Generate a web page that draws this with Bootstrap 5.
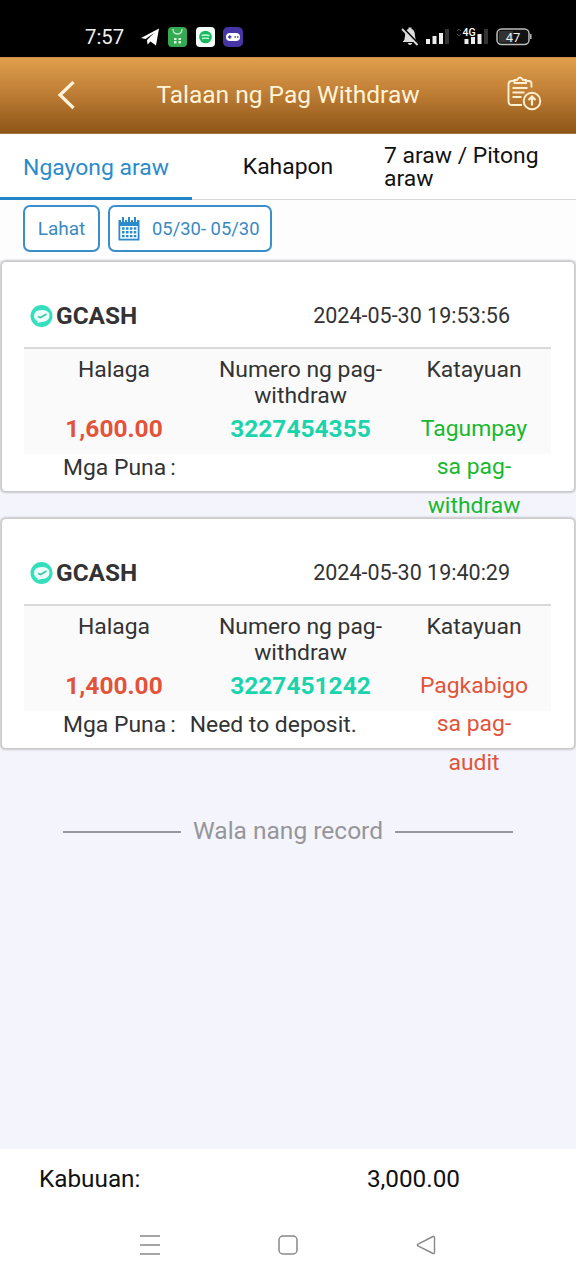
<!DOCTYPE html>
<html lang="fil">
<head>
<meta charset="utf-8">
<meta name="viewport" content="width=device-width, initial-scale=1">
<title>Talaan ng Pag Withdraw</title>
<link href="https://cdn.jsdelivr.net/npm/bootstrap@5.3.0/dist/css/bootstrap.min.css" rel="stylesheet">
<style>
body{font-family:Roboto,"Liberation Sans",sans-serif;font-size:22.9px;line-height:26px;color:#333;background:#f4f4fc;height:1280px;overflow:hidden}
svg{display:block;flex:none}
.status-bar{height:57px;background:#000;color:#eee;padding:16px 44px 0 85px}
.clock{font-size:20.3px;line-height:42px;width:55px}
.app-bar{height:77px;background:linear-gradient(#df9f4c,#c07f36 45%,#8d5517);border-top:1px solid #c98c4b;border-bottom:1px solid #9d7649;color:#fff3da;padding:0 34px 0 56px}
.app-title{font-size:24.5px;font-weight:400;padding:0 7px 2px 0}
.tabs-row{height:66px;background:#fff;color:#111;line-height:23px;border-bottom:1px solid #d8d8d8}
.tab-item{width:192px;height:65px}
.tab-item.current{color:#2a8bcb;height:66px;border-bottom:3px solid #2386c8;padding-top:3px}
.filters{height:60px;background:#fdfdfe;padding:5px 23px 0;gap:8px}
.filter-btn{height:47px;border:2px solid #3a8fca;border-radius:7px;color:#3a8abf;font-size:18.4px;background:#fff}
.type-btn{width:77px;font-size:19px}
.date-btn{width:164px;padding-left:8px;gap:12px}
.record-list{padding-top:2px}
.record{height:229px;margin:0 2px 28px;padding:0 23px 0 22px;background:#fff;border-radius:4px;box-shadow:0 0 2px 1.500px #c8c8ca}
.record-head{height:87px;border-bottom:2px solid #d9d9db;padding:22px 41px 0 6px}
.bank{font-size:24.4px;font-weight:700;gap:3px}
.stamp{font-size:21.5px;padding-top:1px}
.record-grid{display:grid;grid-template-columns:180px 193px 154px;background:#fafafa;height:105px;padding-top:8px;text-align:center;grid-template-rows:52px 38px}
.val{line-height:38.4px;height:38px;padding-top:1px}
.num{font-weight:700;font-size:24.5px}
.red{color:#e2533a}.teal{color:#1cd4ac}.green{color:#16b82d}
.note{padding-left:39px;line-height:28px}
.note-text{margin-left:14px}
.end-row{padding-top:42px;gap:12px}
.end-rule{width:118px;height:1.500px;margin-top:2px;background:#98989c}
.end-text{color:#96969a;font-size:24.5px}
.total{height:60px;background:#fff;color:#111;padding:0 116px 0 39px;font-size:24.3px}
.sys-nav{height:71px;background:#fff;padding:0 140px}
</style>
</head>
<body class="d-flex flex-column">
<header>
 <div class="status-bar d-flex align-items-start justify-content-between">
  <div class="d-flex">
   <span class="clock">7:57</span>
   <svg width="104" height="40" viewBox="140 16 104 40">
    <path d="M141 38 159 28.500 156 45.500 150.500 41.500 147.500 44.500 147 40 154 33 145.500 39Z" fill="#fff"/>
    <rect x="168" y="27" width="19" height="20" rx="4" fill="#36aa52"/><path d="M173 29q0 5 4.500 5t4.500-5" fill="none" stroke="#c5f0c9" stroke-width="1.300"/><path d="M174 38h2.500v2H174zM178.500 38h2.500v2h-2.500zM174 41h2.500v2.500H174zM178.500 41h2.500v2.500h-2.500z" fill="#d7f5d9"/>
    <rect x="196" y="27" width="19" height="20" rx="4" fill="#f4fff7"/><circle cx="205.500" cy="37" r="6.300" fill="#18b861"/><path d="M201.500 35.500q4-1 8 0M202 38.500q3.500-.8 7 0" stroke="#c9ffdc" stroke-width="1.300" fill="none"/>
    <rect x="223" y="27" width="20" height="20" rx="5" fill="#4535a5"/><rect x="226" y="33" width="14" height="8" rx="4" fill="#fff"/><path d="M228 37h3.500M229.700 35.300v3.400M234.500 37h1.500M237 37h1.500" stroke="#4535a5" stroke-width="1.400"/>
   </svg>
  </div>
  <svg width="132" height="40" viewBox="400 16 132 40">
   <path d="M402.500 42q2.500-2 2.500-6 0-6 3.500-7v-1.500h3V29q3.500 1 3.500 7 0 4 2.500 6zM407.500 43h5q-2.500 4-5 0" fill="#ddd"/><path d="M403.500 28.500 419 44.500" stroke="#000" stroke-width="2"/><path d="M402 29 417.500 45" stroke="#ddd" stroke-width="1.800"/>
   <g fill="#eee"><path d="M426 39h4v5h-4zM432.500 36h4v8h-4zM439 33h4v11h-4zM464.500 39h4v5h-4zM471 37h4v7h-4zM477.500 34h4v10h-4z"/></g>
   <path d="M445 29h4v15h-4zM484 29h4v15h-4z" fill="#333"/><path d="m457 31 2-2 2 2M457 34l2 2 2-2" fill="none" stroke="#444"/>
   <text x="462.500" y="36" font-size="10.500" font-weight="500" fill="#fff">4G</text>
   <rect x="497" y="29" width="32" height="15.500" rx="4.500" fill="#111" stroke="#bbb" stroke-width="1.500"/><path d="M499 31h14v11.500h-14z" fill="#333"/><path d="M530.800 34v5" stroke="#aaa" stroke-width="1.600"/><text x="513" y="41.500" text-anchor="middle" font-size="13" fill="#eee">47</text>
  </svg>
 </div>
 <nav class="app-bar d-flex align-items-center justify-content-between">
  <svg width="20" height="30" viewBox="0 1 20 30"><path d="M17.500 2 4 15 17.500 28" fill="none" stroke="#fff3da" stroke-width="3.200"/></svg>
  <h1 class="app-title m-0">Talaan ng Pag Withdraw</h1>
  <svg width="35" height="36" viewBox="507 77.500 35 36" overflow="visible" fill="none" stroke="#fff0d2" stroke-width="1.900"><path d="M522 104.500h-10q-3.500 0-3.500-3.500V84q0-3.500 3-3.500h3M526 80.500h3q2.500 0 2.500 3v3.500"/><path d="M514.500 82.500v-3h2.500q3-5 6 0h3v3z"/><path d="M512.500 87.500h15M512.500 92h12M512.500 96.500h9"/><circle cx="532" cy="100.500" r="8.300"/><path d="M532 105v-8.500M528.500 99.500l3.500-3.500 3.500 3.500" stroke-width="2.200"/></svg>
 </nav>
</header>
<div class="tabs-row d-flex">
 <div class="tab-item current d-flex align-items-center justify-content-center">Ngayong araw</div>
 <div class="tab-item d-flex align-items-center justify-content-center">Kahapon</div>
 <div class="tab-item d-flex align-items-center"><span>7 araw / Pitong araw</span></div>
</div>
<div class="filters d-flex">
 <div class="filter-btn type-btn d-flex align-items-center justify-content-center">Lahat</div>
 <div class="filter-btn date-btn d-flex align-items-center">
  <svg width="22" height="24" viewBox="0 0 22 24"><path d="M.5 3h21v20.500H.5z" fill="#2b8acb"/><path d="M2.300 9h17.400v12.700H2.300z" fill="#fff"/><path d="M5 0v5M11 0v5M17 0v5" stroke="#fff" stroke-width="4"/><path d="M5 0v5M11 0v5M17 0v5" stroke="#2b8acb" stroke-width="2"/><path d="M4 11.500h14.500M4 15.300h14.500M4 19.100h14.500" stroke="#2b8acb" stroke-width="2.400" stroke-dasharray="2.600 1.300"/></svg>
  <span>05/30- 05/30</span>
 </div>
</div>
<main class="record-list flex-grow-1">
 <section class="record">
  <div class="record-head d-flex align-items-center justify-content-between">
   <div class="bank d-flex align-items-center"><svg width="23" height="23" viewBox="0 0 23 23"><circle cx="11.500" cy="12" r="11" fill="#35dfbc"/><path d="M4 12q0-6 7.500-6 8 0 8 5.500 0 6.500-8 6.500l-4 1v-2Q4 15.500 4 12" fill="#ecfff9"/><path d="m8 12.500 2.500 1 6-3.500" fill="none" stroke="#35c9a9" stroke-width="1.600"/></svg>GCASH</div>
   <div class="stamp">2024-05-30 19:53:56</div>
  </div>
  <div class="record-grid">
   <div>Halaga</div><div>Numero ng pag-<br>withdraw</div><div>Katayuan</div>
   <div class="val num red">1,600.00</div><div class="val num teal">3227454355</div><div class="val green">Tagumpay<br>sa pag-<br>withdraw</div>
  </div>
  <div class="note"><span>Mga Puna</span><span class="ms-1">:</span></div>
 </section>
 <section class="record">
  <div class="record-head d-flex align-items-center justify-content-between">
   <div class="bank d-flex align-items-center"><svg width="23" height="23" viewBox="0 0 23 23"><circle cx="11.500" cy="12" r="11" fill="#35dfbc"/><path d="M4 12q0-6 7.500-6 8 0 8 5.500 0 6.500-8 6.500l-4 1v-2Q4 15.500 4 12" fill="#ecfff9"/><path d="m8 12.500 2.500 1 6-3.500" fill="none" stroke="#35c9a9" stroke-width="1.600"/></svg>GCASH</div>
   <div class="stamp">2024-05-30 19:40:29</div>
  </div>
  <div class="record-grid">
   <div>Halaga</div><div>Numero ng pag-<br>withdraw</div><div>Katayuan</div>
   <div class="val num red">1,400.00</div><div class="val num teal">3227451242</div><div class="val red">Pagkabigo<br>sa pag-<br>audit</div>
  </div>
  <div class="note d-flex"><span>Mga Puna</span><span class="ms-1">:</span><span class="note-text">Need to deposit.</span></div>
 </section>
 <div class="end-row d-flex align-items-center justify-content-center"><div class="end-rule"></div><div class="end-text">Wala nang record</div><div class="end-rule"></div></div>
</main>
<div class="total d-flex align-items-center justify-content-between"><span>Kabuuan:</span><span>3,000.00</span></div>
<footer class="sys-nav d-flex align-items-center justify-content-between">
 <svg width="20" height="20" viewBox="0 0 20 20"><path d="M0 1h20M0 10h20M0 19h20" stroke="#888" stroke-width="1.500"/></svg>
 <svg width="20" height="20" viewBox="0 0 20 20"><rect x="1" y="1" width="18" height="18" rx="4" fill="none" stroke="#888" stroke-width="1.500"/></svg>
 <svg width="20" height="20" viewBox="0 0 20 20"><path d="M17 1.500 2 9q-1.500 1 0 2l15 7.500q1.500.5 1.500-1v-15q0-1.500-1.500-1z" fill="none" stroke="#888" stroke-width="1.400"/></svg>
</footer>
<script src="https://cdn.jsdelivr.net/npm/bootstrap@5.3.0/dist/js/bootstrap.bundle.min.js"></script>
</body>
</html>
